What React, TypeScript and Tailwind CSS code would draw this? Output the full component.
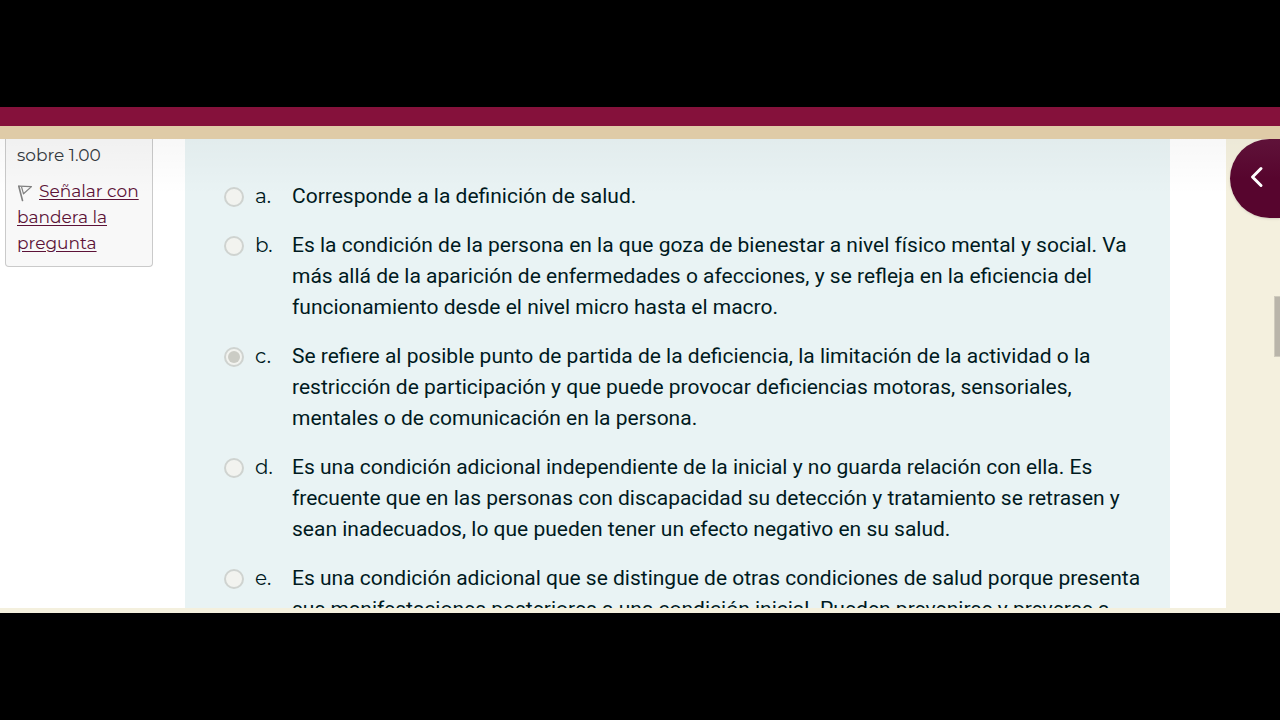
import React from "react";

const answers = [
  { letter: "a", lines: ["Corresponde a la definición de salud."] },
  {
    letter: "b",
    lines: [
      "Es la condición de la persona en la que goza de bienestar a nivel físico mental y social. Va",
      "más allá de la aparición de enfermedades o afecciones, y se refleja en la eficiencia del",
      "funcionamiento desde el nivel micro hasta el macro.",
    ],
  },
  {
    letter: "c",
    checked: true,
    lines: [
      "Se refiere al posible punto de partida de la deficiencia, la limitación de la actividad o la",
      "restricción de participación y que puede provocar deficiencias motoras, sensoriales,",
      "mentales o de comunicación en la persona.",
    ],
  },
  {
    letter: "d",
    lines: [
      "Es una condición adicional independiente de la inicial y no guarda relación con ella. Es",
      "frecuente que en las personas con discapacidad su detección y tratamiento se retrasen y",
      "sean inadecuados, lo que pueden tener un efecto negativo en su salud.",
    ],
  },
  {
    letter: "e",
    lines: [
      "Es una condición adicional que se distingue de otras condiciones de salud porque presenta",
      "sus manifestaciones posteriores a una condición inicial. Pueden prevenirse y preverse a",
    ],
  },
];

function QuestionInfo() {
  return (
    <aside className="ml-[5px] w-[148px] shrink-0 self-start rounded-b-sm border border-t-0 border-[#cacaca] bg-[#f8f8f8] pt-[3px] pr-1 pb-[10px] pl-[11px] font-['Montserrat','Inter',sans-serif] text-[17px] leading-[26px] text-[#343a40]">
      <p>sobre 1.00</p>
      <a href="#flag" className="mt-[10px] block text-[#5c1237]">
        <svg
          viewBox="0 0 16 18"
          className="mr-[6px] inline-block h-[18px] w-4"
          fill="none"
          stroke="#808080"
          strokeLinejoin="round"
          strokeLinecap="round"
        >
          <path d="M1.8 2.2 L5.5 16.5" strokeWidth="1.6" />
          <path d="M1.8 2.2 L14.5 2.6 L6.5 9.8 L4.6 3.2" strokeWidth="1.2" />
        </svg>
        <span className="underline underline-offset-2">
          Señalar con
          <br />
          bandera la
          <br />
          pregunta
        </span>
      </a>
    </aside>
  );
}

function Answer({ letter, lines, checked }: { letter: string; lines: string[]; checked?: boolean }) {
  return (
    <div className="flex items-start">
      <input
        type="radio"
        name="answer"
        id={`answer-${letter}`}
        defaultChecked={checked}
        className="mt-[6px] grid size-5 shrink-0 appearance-none place-items-center rounded-full border-2 border-[#cfd3d0] bg-[#f2f3ef] before:size-3 before:rounded-full checked:before:bg-[#cbccc5]"
      />
      <label htmlFor={`answer-${letter}`} className="flex min-w-0 flex-1 pl-[11px]">
        <span className="w-[37px] shrink-0 font-['Montserrat','Inter',sans-serif] text-xl leading-[31px]">{letter}.</span>
        <span className="whitespace-nowrap">
          {lines.map((line) => (
            <span key={line} className="block">
              {line}
            </span>
          ))}
        </span>
      </label>
    </div>
  );
}

export default function App() {
  return (
    <div className="flex h-screen flex-col bg-black py-[107px]">
      <header className="h-8 shrink-0 border-b-[13px] border-[#dfcba7] bg-[#85113b]" />

      <main className="relative flex min-h-0 flex-1 overflow-hidden bg-white">
        <QuestionInfo />
        <form className="ml-8 flex flex-1 flex-col gap-[18px] bg-[#e9f3f4] pt-[42px] pl-[39px] font-['Roboto',sans-serif] text-[21px] leading-[31px] text-[#001a1e]">
          {answers.map((a) => (
            <Answer key={a.letter} {...a} />
          ))}
        </form>
        <div className="ml-14 w-[54px] shrink-0 bg-[#f4f0de]" />

        {/* header shadow */}
        <div className="pointer-events-none absolute inset-x-0 top-0 h-14 bg-linear-to-b from-black/3 to-transparent" />
        <button
          type="button"
          aria-label="Abrir bloques"
          className="absolute top-0 right-0 flex h-[79px] w-[50px] items-center rounded-l-full bg-linear-to-b from-[#5f1239] to-[#57052e] to-50% pb-[3px] pl-5 shadow-sm"
        >
          <svg viewBox="0 0 14 22" className="h-[22px] w-[14px]" fill="none" stroke="white" strokeWidth="3" strokeLinecap="round" strokeLinejoin="round">
            <path d="M11 2.5 L2.5 11 L11 19.5" />
          </svg>
        </button>
        {/* scroll thumb */}
        <div className="absolute top-[157px] right-0 h-[61px] w-[6px] border border-r-0 border-[#cfcbbd] bg-[#b9b5aa]" />
      </main>

      <footer className="h-[5px] shrink-0 bg-[#f4f0de]" />
    </div>
  );
}
